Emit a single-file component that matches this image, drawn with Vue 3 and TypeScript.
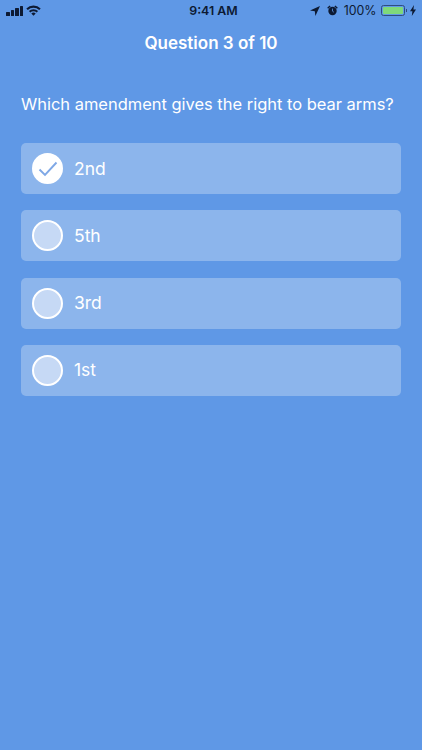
<script setup lang="ts">
interface Option { label: string; checked: boolean }
const options: Option[] = [
  { label: '2nd', checked: true },
  { label: '5th', checked: false },
  { label: '3rd', checked: false },
  { label: '1st', checked: false },
]
</script>

<template>
  <div class="screen">
    <div class="status">
      <div class="status-left">
        <div class="signal"><i class="b1"></i><i class="b2"></i><i class="b3"></i><i class="b4"></i></div>
        <svg class="wifi" width="15" height="11" viewBox="0 0 15 11">
          <path d="M.3 3.6A10.2 10.2 0 0 1 14.7 3.6L13.2 5.1A8.2 8.2 0 0 0 1.8 5.1Z" fill="#0d1a33"/>
          <path d="M2.9 6.1A6.6 6.6 0 0 1 12.1 6.1L10.7 7.5A4.6 4.6 0 0 0 4.3 7.5Z" fill="#0d1a33"/>
          <path d="M5.3 8.5A3.1 3.1 0 0 1 9.7 8.5L7.5 10.8Z" fill="#0d1a33"/>
        </svg>
      </div>
      <div class="time">9:41 AM</div>
      <div class="status-right">
        <svg class="loc" width="10" height="10" viewBox="0 0 10 10"><path d="M10 0 0 4.6 4.8 5.2 5.4 10Z" fill="#0d1a33"/></svg>
        <svg class="alarm" width="11" height="11" viewBox="0 0 11 11">
          <circle cx="5.5" cy="6" r="4.2" fill="#0d1a33"/>
          <path d="M5.5 3.6v2.6l1.4 1" fill="none" stroke="#5f98e6" stroke-width=".8"/>
          <path d="M.2 2.8 2.6.4 3.6 1.4 1.2 3.8ZM10.8 2.8 8.4.4 7.4 1.4 9.8 3.8Z" fill="#0d1a33"/>
        </svg>
        <span class="pct">100%</span>
        <div class="battery"><div class="fill"></div></div>
        <i class="nub"></i>
        <svg class="bolt" width="6" height="11" viewBox="0 0 6 11"><path d="M4 0 0 6.2H2.4L1.8 11 6 4.4H3.4Z" fill="#0d1a33"/></svg>
      </div>
    </div>

    <h1 class="title">Question 3 of 10</h1>
    <p class="question">Which amendment gives the right to bear arms?</p>

    <div class="options">
      <div v-for="o in options" :key="o.label" class="option">
        <div class="radio" :class="{ checked: o.checked }">
          <svg v-if="o.checked" width="20" height="16" viewBox="0 0 20 16">
            <path d="M1.5 8.5 7 14 18.5 1.5" fill="none" stroke="#7fa8e6" stroke-width="1.9"/>
          </svg>
        </div>
        <span class="label">{{ o.label }}</span>
      </div>
    </div>
  </div>
</template>

<style>
html, body { margin: 0; background: #5f98e6; }
</style>

<style scoped>
.screen {
  width: 422px;
  height: 750px;
  background: #5f98e6;
  font-family: Inter, "Liberation Sans", sans-serif;
  color: #fff;
  overflow: hidden;
}
.status {
  height: 21px;
  display: flex;
  align-items: center;
  justify-content: space-between;
  padding: 0 6px 0 6px;
  color: #0d1a33;
  position: relative;
}
.status-left, .status-right { display: flex; align-items: center; }
.signal { display: flex; align-items: flex-end; gap: 1px; height: 10px; }
.signal i { display: block; width: 3.5px; background: #0d1a33; border-radius: .5px; }
.b1 { height: 4px; } .b2 { height: 6px; } .b3 { height: 8px; } .b4 { height: 10px; }
.wifi { margin-left: 3px; }
.time {
  position: absolute;
  left: 5px;
  right: 0;
  text-align: center;
  font-size: 12.4px;
  font-weight: 600;
  line-height: 21px;
}
.loc { margin-right: 7px; }
.alarm { margin-right: 6px; }
.pct { font-size: 12.4px; margin-right: 4px; line-height: 21px; }
.battery {
  width: 20px;
  height: 7px;
  border: 1px solid #2f4d80;
  border-radius: 2.5px;
  padding: 1px;
}
.fill { width: 100%; height: 100%; background: #7fd97a; border-radius: 1px; }
.nub { width: 1.5px; height: 3px; background: #2f4d80; margin: 0 3px 0 1px; }
.title {
  margin: 12px 0 0;
  font-size: 17px;
  line-height: 21px;
  font-weight: 600;
  text-align: center;
}
.question {
  margin: 40px 0 0;
  padding: 0 21px;
  font-size: 16.47px;
  line-height: 21px;
  font-weight: 400;
  white-space: nowrap;
}
.options {
  margin: 28px 21px 0;
  display: flex;
  flex-direction: column;
  gap: 16.33px;
}
.option {
  height: 51px;
  background: #8cb5ec;
  border-radius: 5px;
  display: flex;
  align-items: center;
  padding-left: 11px;
}
.radio {
  width: 31px;
  height: 31px;
  box-sizing: border-box;
  border-radius: 50%;
  border: 2px solid #fff;
  background: #c6d9f5;
  display: flex;
  align-items: center;
  justify-content: center;
}
.radio.checked { background: #fff; }
.label { margin-left: 11px; font-size: 17.5px; line-height: 22px; }
</style>
